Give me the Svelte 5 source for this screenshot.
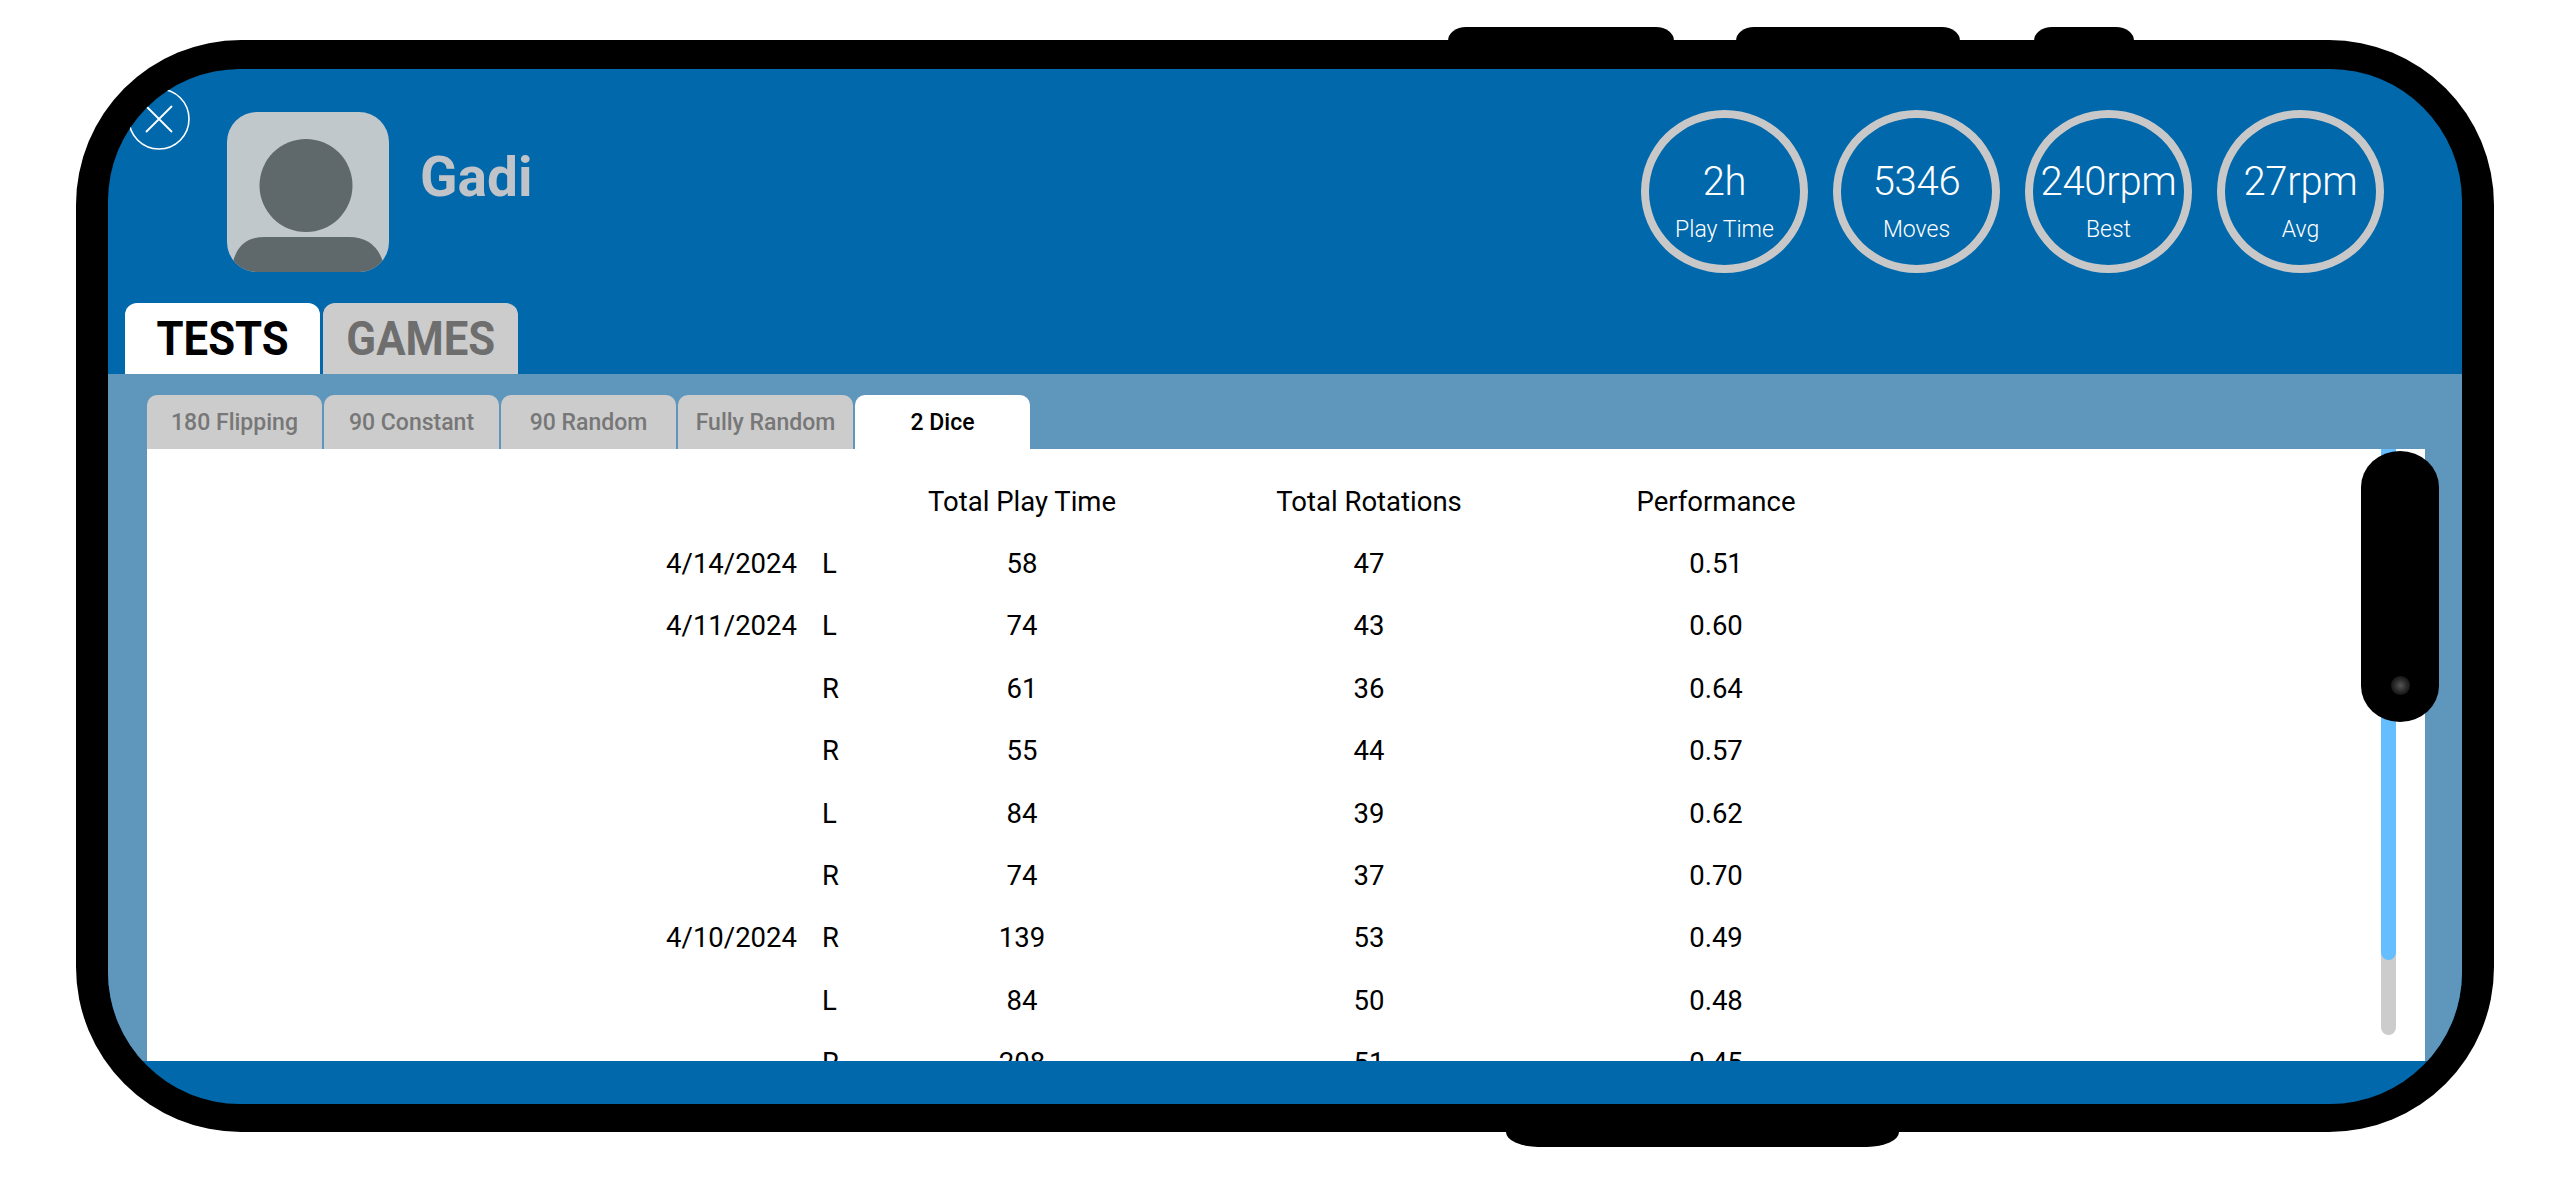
<script>
	const stats = [
		{ value: '2h', label: 'Play Time' },
		{ value: '5346', label: 'Moves' },
		{ value: '240rpm', label: 'Best' },
		{ value: '27rpm', label: 'Avg' }
	];
	const subTabs = ['180 Flipping', '90 Constant', '90 Random', 'Fully Random', '2 Dice'];
	const rows = [
		['4/14/2024', 'L', 58, 47, '0.51'],
		['4/11/2024', 'L', 74, 43, '0.60'],
		['', 'R', 61, 36, '0.64'],
		['', 'R', 55, 44, '0.57'],
		['', 'L', 84, 39, '0.62'],
		['', 'R', 74, 37, '0.70'],
		['4/10/2024', 'R', 139, 53, '0.49'],
		['', 'L', 84, 50, '0.48'],
		['', 'R', 208, 51, '0.45']
	];
</script>

<div class="page">
	<div class="phone">
		<span class="btn btn-a"></span>
		<span class="btn btn-b"></span>
		<span class="btn btn-c"></span>
		<span class="btn-bottom"></span>

		<div class="screen">
			<header>
				<button class="close" aria-label="Close">
					<svg viewBox="0 0 62 62" width="62" height="62">
						<circle cx="31" cy="31" r="30" fill="none" stroke="#fff" stroke-width="1.6" />
						<path d="M18 18 L44 44 M44 18 L18 44" stroke="#fff" stroke-width="1.8" fill="none" />
					</svg>
				</button>
				<svg class="avatar" viewBox="0 0 162 160" width="162" height="160">
					<defs>
						<clipPath id="avatar-clip"><rect width="162" height="160" rx="30" /></clipPath>
					</defs>
					<g clip-path="url(#avatar-clip)">
						<rect width="162" height="160" fill="#c0c8cc" />
						<circle cx="79" cy="73.5" r="46.5" fill="#5f686b" />
						<path d="M6 160 V150 Q12 125 38 125 H122 Q148 125 156 150 V160 Z" fill="#5f686b" />
					</g>
				</svg>
				<div class="name">Gadi</div>
				<div class="stats">
					{#each stats as s}
						<div class="stat">
							<span class="value">{s.value}</span>
							<span class="label">{s.label}</span>
						</div>
					{/each}
				</div>
			</header>

			<nav class="tabs">
				<div class="tab active"><span>TESTS</span></div>
				<div class="tab"><span>GAMES</span></div>
			</nav>

			<section class="body">
				<nav class="subtabs">
					{#each subTabs as t, i}
						<div class="subtab" class:active={i === 4}>{t}</div>
					{/each}
				</nav>
				<div class="panel">
					<table>
						<thead>
							<tr>
								<th class="date"></th>
								<th class="side"></th>
								<th class="num-a">Total Play Time</th>
								<th class="num-b">Total Rotations</th>
								<th class="num-a">Performance</th>
							</tr>
						</thead>
						<tbody>
							{#each rows as r}
								<tr>
									<td class="date">{r[0]}</td>
									<td class="side">{r[1]}</td>
									<td class="num-a">{r[2]}</td>
									<td class="num-b">{r[3]}</td>
									<td class="num-a">{r[4]}</td>
								</tr>
							{/each}
						</tbody>
					</table>
					<div class="scrollbar"><div class="thumb"></div></div>
				</div>
			</section>

			<div class="notch"><span class="camera"></span></div>
		</div>
	</div>
</div>

<style>
	:global(body) {
		margin: 0;
		background: #fff;
	}

	.page {
		height: 1181px;
		box-sizing: border-box;
		padding: 40px 0 0 76px;
		overflow: hidden;
		font-family: Roboto, 'Liberation Sans', sans-serif;
	}

	.phone {
		position: relative;
		box-sizing: border-box;
		width: 2418px;
		height: 1092px;
		padding: 29px 32px 28px;
		background: #000;
		border-radius: 165px;
	}

	.btn {
		position: absolute;
		top: -13px;
		height: 14px;
		background: #000;
		border-radius: 18px 18px 0 0 / 14px 14px 0 0;
	}

	.btn-a {
		left: 1372px;
		width: 226px;
	}

	.btn-b {
		left: 1660px;
		width: 224px;
	}

	.btn-c {
		left: 1958px;
		width: 100px;
	}

	.btn-bottom {
		position: absolute;
		left: 1430px;
		bottom: -15px;
		width: 393px;
		height: 16px;
		background: #000;
		border-radius: 0 0 32px 32px / 0 0 15px 15px;
	}

	.screen {
		position: relative;
		display: flex;
		flex-direction: column;
		height: 100%;
		overflow: hidden;
		background: #0168ab;
		border-radius: 132px;
	}

	header {
		display: flex;
		align-items: flex-start;
		box-sizing: border-box;
		height: 234px;
		flex: none;
		padding: 19px 78px 0 20px;
	}

	.close {
		width: 62px;
		height: 62px;
		padding: 0;
		border: 0;
		background: none;
	}

	.close svg {
		display: block;
	}

	.avatar {
		margin: 24px 0 0 37px;
	}

	.name {
		margin: 58px 0 0 31px;
		font-size: 55px;
		line-height: 62px;
		font-weight: 700;
		color: #c0c4c8;
	}

	.stats {
		display: flex;
		gap: 25px;
		margin: 22px 0 0 auto;
	}

	.stat {
		display: flex;
		flex-direction: column;
		align-items: center;
		box-sizing: border-box;
		width: 167px;
		height: 163px;
		padding-top: 41px;
		border: 8px solid #c8c8c8;
		border-radius: 50%;
		color: #fff;
		white-space: nowrap;
	}

	.value {
		font-size: 40px;
		line-height: 46px;
		font-weight: 300;
		letter-spacing: -0.3px;
	}

	.label {
		margin-top: 11px;
		font-size: 23px;
		line-height: 28px;
		font-weight: 300;
	}

	.tabs {
		display: flex;
		gap: 3px;
		height: 71px;
		flex: none;
		padding-left: 17px;
	}

	.tab {
		display: flex;
		align-items: center;
		justify-content: center;
		width: 195px;
		background: #ccc;
		border-radius: 12px 12px 0 0;
		color: #6e6e6e;
		font-size: 48px;
		font-weight: 700;
	}

	.tab span {
		display: inline-block;
		transform: scaleX(0.91);
	}

	.tab.active {
		background: #fff;
		color: #000;
	}

	.body {
		display: flex;
		flex-direction: column;
		height: 687px;
		flex: none;
		box-sizing: border-box;
		padding: 21px 37px 0 39px;
		background: #5f96bb;
	}

	.subtabs {
		display: flex;
		gap: 2px;
		height: 54px;
		flex: none;
	}

	.subtab {
		display: flex;
		align-items: center;
		justify-content: center;
		width: 175px;
		background: #ccc;
		border-radius: 10px 10px 0 0;
		color: #777;
		font-size: 23px;
		font-weight: 500;
	}

	.subtab.active {
		background: #fff;
		color: #000;
	}

	.panel {
		position: relative;
		flex: 1;
		min-height: 0;
		overflow: hidden;
		padding-top: 21px;
		box-sizing: border-box;
		background: #fff;
	}

	table {
		border-collapse: collapse;
		table-layout: fixed;
		width: 1741px;
		color: #000;
		font-size: 27.5px;
	}

	th,
	td {
		height: 62.4px;
		padding: 0;
		text-align: center;
		font-weight: 450;
		white-space: nowrap;
	}

	.date {
		width: 650px;
		text-align: right;
	}

	.side {
		width: 28px;
		padding-left: 25px;
		text-align: left;
	}

	.num-a {
		width: 344px;
	}

	.num-b {
		width: 350px;
	}

	.scrollbar {
		position: absolute;
		top: 0;
		left: 2234px;
		width: 15px;
		height: 586px;
		background: #ccc;
		border-radius: 0 0 8px 8px;
	}

	.thumb {
		height: 511px;
		background: #64beff;
		border-radius: 0 0 8px 8px;
	}

	.notch {
		position: absolute;
		left: 2253px;
		top: 382px;
		width: 78px;
		height: 271px;
		background: #000;
		border-radius: 39px / 36px;
	}

	.camera {
		position: absolute;
		left: 30px;
		top: 225px;
		width: 19px;
		height: 19px;
		border-radius: 50%;
		background: radial-gradient(circle, #555 0, #222 55%, #0a0a0a 100%);
	}
</style>
